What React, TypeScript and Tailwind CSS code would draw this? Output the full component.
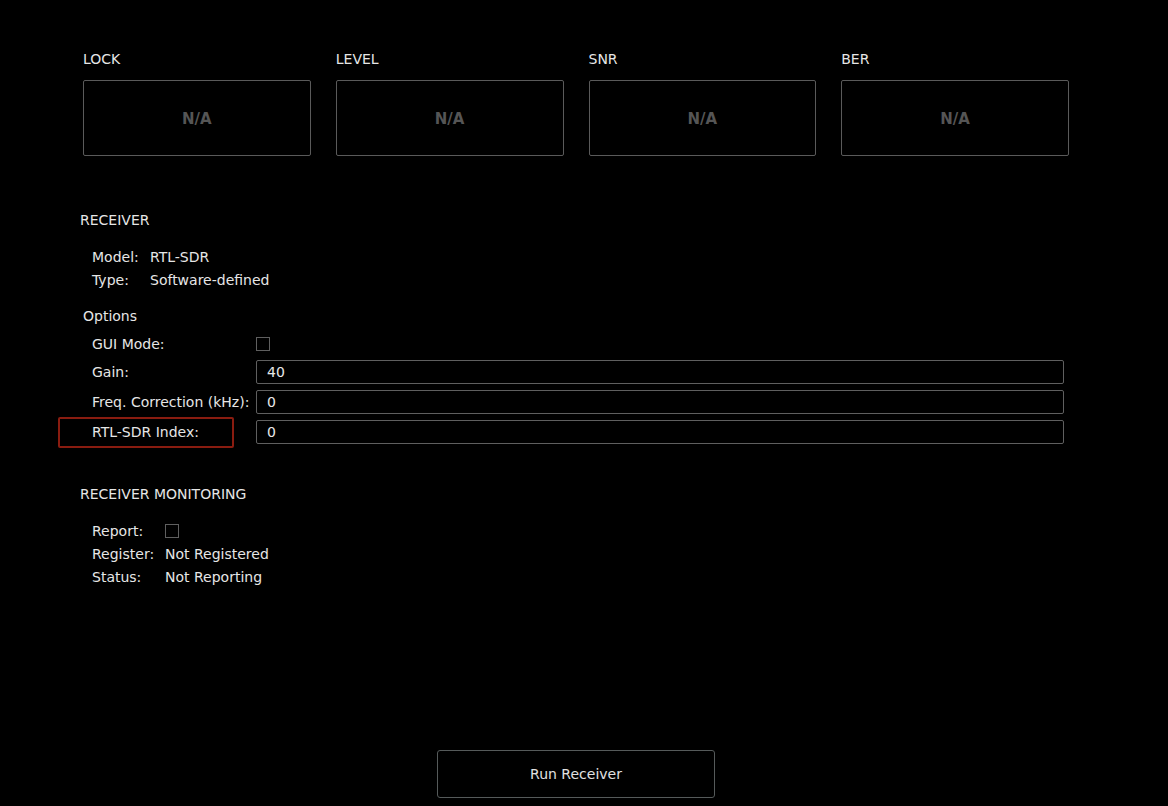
import React from "react";

const cards = ["LOCK", "LEVEL", "SNR", "BER"];

function Input({ value }: { value: string }) {
  return (
    <div className="flex-1 h-[24px] border border-[#5f5f5f] rounded-[2px] flex items-center pl-[10px] text-[#e8e8e8]">
      {value}
    </div>
  );
}

export default function App() {
  return (
    <div
      className="w-[1168px] h-[806px] bg-black text-[14px] text-[#e6e6e6] leading-[16px] overflow-hidden"
      style={{ fontFamily: '"DejaVu Sans", Verdana, sans-serif' }}
    >
      <div className="w-[992px] ml-[80px] flex flex-col">
        <div className="grid grid-cols-4 gap-x-[25px] mt-[51px] ml-[3px] w-[986px]">
          {cards.map((c) => (
            <div key={c} className="flex flex-col">
              <div className="h-[16px]">{c}</div>
              <div className="mt-[13px] h-[76px] border border-[#5a5a5a] rounded-[2px] flex items-center justify-center pt-[2px] font-bold text-[15px] text-[#555555]">
                N/A
              </div>
            </div>
          ))}
        </div>

        <div className="mt-[56px] h-[16px]">RECEIVER</div>

        <div className="mt-[21px] ml-[12px] flex flex-col gap-[7px]">
          <div className="flex h-[16px]">
            <span className="w-[58px]">Model:</span>
            <span>RTL-SDR</span>
          </div>
          <div className="flex h-[16px]">
            <span className="w-[58px]">Type:</span>
            <span>Software-defined</span>
          </div>
        </div>

        <div className="mt-[20px] ml-[3px] h-[16px]">Options</div>

        <div className="mt-[8px] ml-[12px] flex flex-col">
          <div className="flex items-center h-[24px]">
            <span className="w-[164px]">GUI Mode:</span>
            <div className="w-[14px] h-[14px] border border-[#5f5f5f]" />
          </div>
          <div className="flex items-center h-[24px] mt-[4px] w-[972px]">
            <span className="w-[164px]">Gain:</span>
            <Input value="40" />
          </div>
          <div className="flex items-center h-[24px] mt-[6px] w-[972px]">
            <span className="w-[164px] whitespace-nowrap">Freq. Correction (kHz):</span>
            <Input value="0" />
          </div>
          <div className="flex items-center h-[24px] mt-[6px] w-[972px]">
            <span className="w-[164px] relative">
              RTL-SDR Index:
              <span className="absolute left-[-34px] top-[-7px] w-[176px] h-[31px] border-2 border-[#8a1c10] rounded-[2px]" />
            </span>
            <Input value="0" />
          </div>
        </div>

        <div className="mt-[42px] h-[16px]">RECEIVER MONITORING</div>

        <div className="mt-[21px] ml-[12px] flex flex-col gap-[7px]">
          <div className="flex items-center h-[16px]">
            <span className="w-[73px]">Report:</span>
            <div className="w-[14px] h-[14px] border border-[#5f5f5f]" />
          </div>
          <div className="flex h-[16px]">
            <span className="w-[73px]">Register:</span>
            <span>Not Registered</span>
          </div>
          <div className="flex h-[16px]">
            <span className="w-[73px]">Status:</span>
            <span>Not Reporting</span>
          </div>
        </div>

        <div className="mt-[165px] flex justify-center">
          <button className="w-[278px] h-[48px] border border-[#555a5a] rounded-[3px] text-[#e0e0e0] bg-black">
            Run Receiver
          </button>
        </div>
      </div>
    </div>
  );
}
